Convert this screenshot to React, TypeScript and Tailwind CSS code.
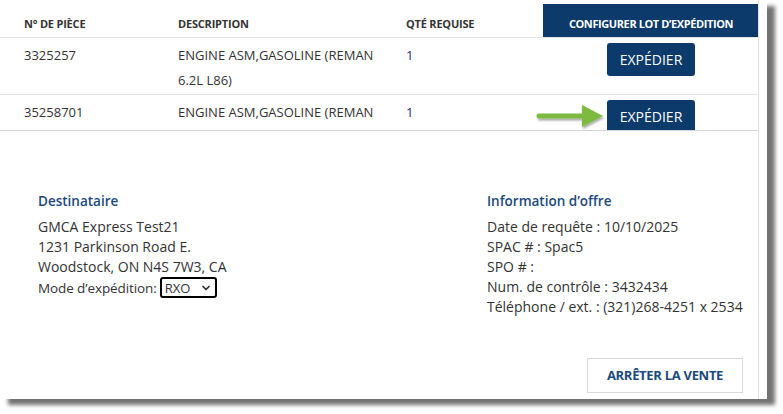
import React from "react";
import { ChevronDown } from "lucide-react";

const rows = [
  { part: "3325257", desc: ["ENGINE ASM,GASOLINE (REMAN", "6.2L L86)"], qty: "1" },
  { part: "35258701", desc: ["ENGINE ASM,GASOLINE (REMAN"], qty: "1" },
];

const ShipButton = () => (
  <button className="h-[33px] w-[88px] rounded-[3px] bg-[#0b3a6b] text-[14px] text-white">
    EXPÉDIER
  </button>
);

const Arrow = () => (
  <svg width="72" height="30" viewBox="0 0 72 30" className="absolute left-[536px] top-[101px]">
    <defs>
      <filter id="sh" x="-20%" y="-40%" width="140%" height="180%">
        <feDropShadow dx="1" dy="2" stdDeviation="1.2" floodColor="#000" floodOpacity="0.35" />
      </filter>
    </defs>
    <g filter="url(#sh)">
      <path d="M3 15 L50 15" stroke="#7cbb3f" strokeWidth="5" strokeLinecap="round" />
      <path d="M46 4 L67 15 L46 26 Z" fill="#7cbb3f" />
    </g>
  </svg>
);

export default function App() {
  return (
    <div className="w-[783px] h-[414px] bg-white" style={{ fontFamily: '"Open Sans", sans-serif' }}>
      <div className="relative w-[767px] h-[399px] bg-white shadow-[8px_6px_4px_rgba(0,0,0,0.55)]">
        <div className="w-[759px] h-full border-r border-[#e2e2e2] flex flex-col">
          {/* table */}
          <div className="h-[130px] overflow-hidden pt-[4px]">
            <div className="grid grid-cols-[166px_228px_149px_216px] h-[34px] border-b border-[#e4e4e4] text-[11px] font-bold text-[#333] tracking-[-0.2px]">
              <div className="pl-[24px] pt-[12px]">N° DE PIÈCE</div>
              <div className="pl-[12px] pt-[12px]">DESCRIPTION</div>
              <div className="pl-[12px] pt-[12px]">QTÉ REQUISE</div>
              <div className="bg-[#0b3a6b] text-white text-center pt-[12px] tracking-[-0.4px]">
                CONFIGURER LOT D’EXPÉDITION
              </div>
            </div>
            {rows.map((r) => (
              <div
                key={r.part}
                className="grid grid-cols-[166px_228px_149px_216px] h-[57px] border-b border-[#e4e4e4] text-[13px] text-[#333] leading-[25px]"
              >
                <div className="pl-[24px] pt-[5px]">{r.part}</div>
                <div className="pl-[12px] pt-[5px]">
                  {r.desc.map((d) => (
                    <div key={d}>{d}</div>
                  ))}
                </div>
                <div className="pl-[12px] pt-[5px] text-[#26266e]">{r.qty}</div>
                <div className="flex justify-center pt-[5px]">
                  <ShipButton />
                </div>
              </div>
            ))}
          </div>

          {/* details panel */}
          <div className="flex-1 border-t border-[#d6d6d6] flex flex-col">
            <div className="flex pt-[60px] text-[14px] leading-[20px] text-[#333]">
              <div className="pl-[38px] w-[487px]">
                <div className="text-[13.5px] font-semibold text-[#1c4a7c] mb-[6px]">Destinataire</div>
                <div>GMCA Express Test21</div>
                <div>1231 Parkinson Road E.</div>
                <div>Woodstock, ON N4S 7W3, CA</div>
                <div className="flex items-center gap-[3px]">
                  <span className="text-[13.5px] tracking-[-0.1px]">Mode d’expédition:</span>
                  <div className="flex items-center justify-between w-[57px] h-[21px] border-2 border-black rounded-[3px] px-[3px] text-[13px]">
                    <span>RXO</span>
                    <ChevronDown size={12} strokeWidth={3.5} />
                  </div>
                </div>
              </div>
              <div>
                <div className="text-[13.5px] font-semibold text-[#1c4a7c] mb-[6px]">Information d’offre</div>
                <div>Date de requête : 10/10/2025</div>
                <div>SPAC # : Spac5</div>
                <div>SPO # :</div>
                <div>Num. de contrôle : 3432434</div>
                <div>Téléphone / ext. : (321)268-4251 x 2534</div>
              </div>
            </div>
            <div className="flex-1 flex items-end justify-end pr-[15px] pb-[6px]">
              <button className="h-[35px] w-[156px] border border-[#d9d9d9] text-[13px] font-bold text-[#1c4a7c] tracking-[-0.3px]">
                ARRÊTER LA VENTE
              </button>
            </div>
          </div>
        </div>
        <Arrow />
      </div>
    </div>
  );
}
